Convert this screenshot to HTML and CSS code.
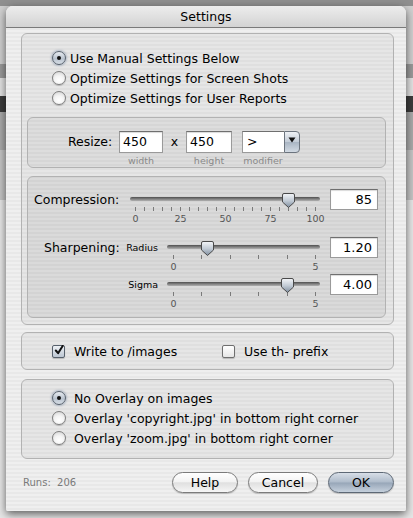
FILE: index.html
```html
<!DOCTYPE html>
<html>
<head>
<meta charset="utf-8">
<link rel="stylesheet" href="styles.css">
</head>
<body>
<div class="dialog">
  <div class="titlebar">Settings</div>
  <div class="content">
    <div class="group g-main">
      <div class="radio r-main on"><span class="rb"></span>Use Manual Settings Below</div>
      <div class="radio r-main"><span class="rb"></span>Optimize Settings for Screen Shots</div>
      <div class="radio r-main"><span class="rb"></span>Optimize Settings for User Reports</div>

      <div class="group sub resize">
        <div class="rs-row">
          <span class="rs-label">Resize:</span>
          <div class="fcol"><div class="input w-in">450</div><span class="cap">width</span></div>
          <span class="times">x</span>
          <div class="fcol"><div class="input h-in">450</div><span class="cap">height</span></div>
          <div class="fcol pcol">
            <div class="popup"><span class="pf">&gt;</span><span class="pbtn"><svg width="8" height="6" viewBox="0 0 8 6"><path d="M0.5 0.5 L7.5 0.5 L4 5.5 Z" fill="#111"/></svg></span></div>
            <span class="cap cap-mod">modifier</span>
          </div>
        </div>
      </div>

      <div class="group sub sliders">
        <div class="srow">
          <div class="slabel l-comp">Compression:</div>
          <div class="slider s-comp">
            <div class="track"><svg class="thumb" style="left:151.5px" width="13" height="15" viewBox="0 0 13 15"><defs><linearGradient id="tg1" x1="0" y1="0" x2="0" y2="1"><stop offset="0" stop-color="#f4f6f9"/><stop offset="0.5" stop-color="#c3ccd6"/><stop offset="1" stop-color="#7e8d9e"/></linearGradient></defs><path d="M2 0.5 H11 A1.5 1.5 0 0 1 12.5 2 V9 L6.5 14.5 L0.5 9 V2 A1.5 1.5 0 0 1 2 0.5 Z" fill="url(#tg1)" stroke="#4a4a4a"/></svg></div>
            <div class="ticks"><i></i><i></i><i></i><i></i><i></i><i></i><i></i><i></i><i></i><i></i><i></i><i></i><i></i><i></i><i></i><i></i><i></i><i></i><i></i><i></i><i></i></div>
            <div class="tl"><span>0</span><span>25</span><span>50</span><span>75</span><span>100</span></div>
          </div>
          <div class="input val">85</div>
        </div>
        <div class="srow row2">
          <div class="slabel l-sharp"><span class="sh">Sharpening:</span><span class="small">Radius</span></div>
          <div class="slider s-small">
            <div class="track"><svg class="thumb" style="left:33.5px" width="13" height="15" viewBox="0 0 13 15"><defs><linearGradient id="tg2" x1="0" y1="0" x2="0" y2="1"><stop offset="0" stop-color="#f4f6f9"/><stop offset="0.5" stop-color="#c3ccd6"/><stop offset="1" stop-color="#7e8d9e"/></linearGradient></defs><path d="M2 0.5 H11 A1.5 1.5 0 0 1 12.5 2 V9 L6.5 14.5 L0.5 9 V2 A1.5 1.5 0 0 1 2 0.5 Z" fill="url(#tg2)" stroke="#4a4a4a"/></svg></div>
            <div class="ticks"><i></i><i></i><i></i><i></i><i></i><i></i></div>
            <div class="tl"><span>0</span><span>5</span></div>
          </div>
          <div class="input val">1.20</div>
        </div>
        <div class="srow row3">
          <div class="slabel l-sharp"><span class="sh"></span><span class="small">Sigma</span></div>
          <div class="slider s-small">
            <div class="track"><svg class="thumb" style="left:113.5px" width="13" height="15" viewBox="0 0 13 15"><defs><linearGradient id="tg3" x1="0" y1="0" x2="0" y2="1"><stop offset="0" stop-color="#f4f6f9"/><stop offset="0.5" stop-color="#c3ccd6"/><stop offset="1" stop-color="#7e8d9e"/></linearGradient></defs><path d="M2 0.5 H11 A1.5 1.5 0 0 1 12.5 2 V9 L6.5 14.5 L0.5 9 V2 A1.5 1.5 0 0 1 2 0.5 Z" fill="url(#tg3)" stroke="#4a4a4a"/></svg></div>
            <div class="ticks"><i></i><i></i><i></i><i></i><i></i><i></i></div>
            <div class="tl"><span>0</span><span>5</span></div>
          </div>
          <div class="input val">4.00</div>
        </div>
      </div>
    </div>

    <div class="group g-write">
      <div class="check c1 on"><span class="cb"><svg width="11" height="11" viewBox="0 0 11 11"><path d="M2 5.5 L4.5 8.5 L9.5 0.5" fill="none" stroke="#111" stroke-width="2.2" stroke-linecap="round" stroke-linejoin="round"/></svg></span>Write to /images</div>
      <div class="check"><span class="cb"></span>Use th- prefix</div>
    </div>

    <div class="group g-overlay">
      <div class="radio r-ov on"><span class="rb"></span>No Overlay on images</div>
      <div class="radio r-ov"><span class="rb"></span>Overlay 'copyright.jpg' in bottom right corner</div>
      <div class="radio r-ov"><span class="rb"></span>Overlay 'zoom.jpg' in bottom right corner</div>
    </div>

    <div class="footer">
      <span class="runs">Runs:&nbsp; 206</span>
      <div class="buttons">
        <span class="btn b-help">Help</span>
        <span class="btn b-cancel">Cancel</span>
        <span class="btn b-ok">OK</span>
      </div>
    </div>
  </div>
</div>
</body>
</html>
```

FILE: styles.css
```css
* { box-sizing: border-box; }
html, body { margin: 0; padding: 0; }
body {
  width: 413px;
  height: 518px;
  overflow: hidden;
  background: linear-gradient(to bottom,
    #8f8f8f 0, #8f8f8f 6px,
    #cfcfcf 6px, #cfcfcf 64px,
    #9a9a9a 64px, #9a9a9a 78px,
    #e2e2e2 78px, #e2e2e2 96px,
    #3c3c3c 96px, #3c3c3c 112px,
    #a9a9a9 112px, #a9a9a9 150px,
    #c4c4c4 150px, #c4c4c4 200px,
    #e6e6e6 200px, #e6e6e6 100%);
  font-family: "DejaVu Sans", "Liberation Sans", sans-serif;
  font-size: 12px;
  color: #000;
}
.dialog {
  margin: 6px 0 0 6px;
  width: 400px;
  height: 505px;
  border-radius: 7px 7px 2px 2px;
  background: repeating-linear-gradient(to bottom, #efefef 0, #efefef 2px, #e8e8e8 2px, #e8e8e8 4px);
  box-shadow: 0 3px 9px rgba(0, 0, 0, 0.6);
  display: flex;
  flex-direction: column;
  overflow: hidden;
}
.titlebar {
  height: 22px;
  line-height: 21px;
  text-align: center;
  font-size: 12.5px;
  background: linear-gradient(to bottom, #ededed, #d3d3d3);
  border-bottom: 1px solid #7a7a7a;
}
.content {
  padding: 5px 12px 0 15px;
  display: flex;
  flex-direction: column;
}
.group {
  border: 1px solid #b2b2b2;
  border-radius: 6px;
  background: rgba(0, 0, 0, 0.035);
}
.g-main { padding: 14px 7px 6px 5px; }
.radio { height: 20px; display: flex; align-items: center; }
.r-main { padding-left: 25px; font-size: 12.5px; }
.r-main .rb { margin-right: 4px; }
.rb {
  width: 14px;
  height: 14px;
  border-radius: 50%;
  border: 1px solid #7e7e7e;
  background: radial-gradient(circle at 50% 70%, #ffffff 0, #f4f4f4 45%, #cfcfcf 100%);
  box-shadow: 0 1px 1px rgba(0, 0, 0, 0.2);
  display: flex;
  align-items: center;
  justify-content: center;
  flex: 0 0 14px;
}
.radio.on .rb {
  border-color: #56606c;
  background: linear-gradient(to bottom, #e9edf2 0, #b9c3cf 55%, #d7dee6 100%);
  box-shadow: 0 0 2px 1px rgba(110, 130, 160, 0.45);
}
.radio.on .rb::after {
  content: "";
  width: 4px;
  height: 4px;
  border-radius: 50%;
  background: #111;
}

/* resize */
.sub { background: rgba(0, 0, 0, 0.04); }
.resize {
  margin-top: 9px;
  height: 51px;
  padding: 13px 0 0 40px;
}
.rs-row { display: flex; align-items: flex-start; }
.rs-label { width: 51px; line-height: 22px; font-size: 12.5px; }
.fcol { display: flex; flex-direction: column; }
.input {
  height: 22px;
  background: #fff;
  border: 1px solid #9a9a9a;
  border-top-color: #6f6f6f;
  box-shadow: inset 0 1px 1px rgba(0, 0, 0, 0.15);
  padding: 0 3px;
  line-height: 20px;
  font-size: 12.5px;
}
.w-in { width: 44px; }
.h-in { width: 46px; }
.times { width: 23px; text-align: center; line-height: 22px; font-size: 12.5px; }
.pcol { margin-left: 10px; }
.popup { display: flex; width: 58px; height: 22px; }
.pf {
  width: 42px;
  background: #fff;
  border: 1px solid #9a9a9a;
  border-top-color: #6f6f6f;
  border-right: none;
  padding-left: 4px;
  line-height: 20px;
  font-size: 12.5px;
}
.pbtn {
  width: 16px;
  border: 1px solid #6c747e;
  border-radius: 0 4px 4px 0;
  background: linear-gradient(to bottom, #eef1f5 0, #c2cbd6 50%, #aab6c4 52%, #d2dae3 100%);
  display: flex;
  align-items: flex-start;
  justify-content: center;
  padding-top: 5px;
}
.cap {
  display: block;
  text-align: center;
  font-size: 9.5px;
  color: #8a8a8a;
  line-height: 11px;
  margin-top: 2px;
}
.cap-mod { width: 42px; }

/* sliders */
.sliders {
  margin-top: 8px;
  height: 142px;
  padding: 12px 7px 0 6px;
  background: rgba(0, 0, 0, 0.05);
}
.srow { display: flex; align-items: flex-start; }
.row2 { margin-top: 13px; }
.row3 { margin-top: 2px; }
.slabel { line-height: 21px; font-size: 12.5px; }
.l-comp { width: 96px; }
.l-sharp {
  width: 133px;
  display: flex;
  justify-content: space-between;
  padding: 0 9px 0 10px;
}
.small { font-size: 9.5px; }
.slider { padding-top: 8px; }
.s-comp { width: 190px; }
.s-small { width: 153px; }
.track {
  position: relative;
  height: 4px;
  border-radius: 2px;
  background: linear-gradient(to bottom, #4e4e4e, #8a8a8a 60%, #b0b0b0);
}
.thumb { position: absolute; top: -4px; display: block; }
.ticks {
  display: flex;
  justify-content: space-between;
  margin-top: 6px;
  height: 4px;
  padding: 0 4px 0 5px;
}
.s-small .ticks { padding: 0 4px 0 6px; }
.ticks i { width: 1px; background: #7a7a7a; }
.tl {
  display: flex;
  justify-content: space-between;
  padding: 0 4px 0 5px;
  margin-top: 2px;
  height: 11px;
  font-size: 9.5px;
  color: #555;
  line-height: 11px;
}
.s-small .tl { padding: 0 4px 0 6px; }
.tl span { width: 1px; display: flex; justify-content: center; white-space: nowrap; }
.val {
  margin-left: auto;
  width: 48px;
  height: 21px;
  text-align: right;
  padding-right: 5px;
  font-size: 13px;
}

/* write */
.g-write {
  margin-top: 7px;
  height: 38px;
  padding-left: 30px;
  display: flex;
  align-items: center;
}
.check { display: flex; align-items: center; font-size: 12.5px; }
.c1 { width: 170px; }
.cb {
  width: 13px;
  height: 13px;
  margin-right: 9px;
  border: 1px solid #6f6f6f;
  border-radius: 2px;
  background: linear-gradient(to bottom, #ffffff, #e6e6e6);
  box-shadow: 0 1px 1px rgba(0, 0, 0, 0.2);
  display: flex;
  align-items: center;
  justify-content: center;
  flex: 0 0 13px;
}
.check.on .cb {
  border-color: #56606c;
  background: linear-gradient(to bottom, #eef1f5, #bcc6d2);
}
.cb svg { display: block; margin-top: -2px; margin-left: 1px; }

/* overlay */
.g-overlay {
  margin-top: 9px;
  height: 80px;
  padding: 8px 0 0 30px;
}
.r-ov { font-size: 12.5px; }
.r-ov .rb { margin-right: 8px; }

/* footer */
.footer {
  margin-top: 13px;
  display: flex;
  align-items: center;
  justify-content: space-between;
  padding-left: 2px;
}
.runs { font-size: 10px; color: #7a7a7a; }
.buttons { display: flex; gap: 10px; }
.btn {
  height: 21px;
  border-radius: 11px;
  border: 1px solid #7b7b7b;
  background: linear-gradient(to bottom, #ffffff 0, #f3f3f3 45%, #e0e0e0 52%, #f6f6f6 100%);
  box-shadow: 0 1px 1px rgba(0, 0, 0, 0.2);
  font-size: 12.5px;
  line-height: 19px;
  text-align: center;
}
.b-help { width: 66px; }
.b-cancel { width: 70px; }
.b-ok {
  width: 66px;
  border-color: #5d6875;
  background: linear-gradient(to bottom, #d7dee7 0, #aebbca 48%, #97a6b8 52%, #c5d0dc 100%);
}
```
